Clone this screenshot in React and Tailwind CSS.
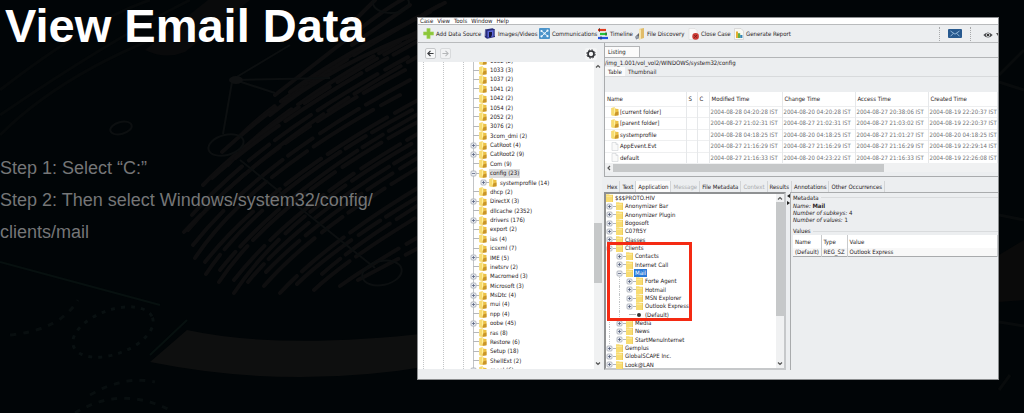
import React from "react";

const dirs = [
  ["1032 (2)", ""], ["1033 (3)", ""], ["1037 (2)", ""], ["1041 (2)", ""], ["1042 (2)", ""], ["1054 (2)", ""],
  ["2052 (2)", ""], ["3076 (2)", ""], ["3com_dmi (2)", ""], ["CatRoot (4)", "+"], ["CatRoot2 (9)", "+"],
  ["Com (9)", ""], ["config (23)", "-"], ["systemprofile (14)", "+", true], ["dhcp (2)", ""], ["DirectX (3)", "+"],
  ["dllcache (2352)", ""], ["drivers (176)", "+"], ["export (2)", ""], ["ias (4)", ""], ["icsxml (7)", ""],
  ["IME (5)", "+"], ["inetsrv (2)", ""], ["Macromed (3)", "+"], ["Microsoft (3)", "+"], ["MsDtc (4)", "+"],
  ["mui (4)", "+"], ["npp (4)", ""], ["oobe (45)", "+"], ["ras (8)", ""], ["Restore (6)", ""],
  ["Setup (18)", ""], ["ShellExt (2)", ""], ["spool (6)", "+"],
];

const files = [
  ["[current folder]", true, "2004-08-28 04:20:28 IST", "2004-08-20 04:20:28 IST", "2004-08-27 20:38:06 IST", "2004-08-19 22:20:37 IST"],
  ["[parent folder]", true, "2004-08-27 21:02:31 IST", "2004-08-27 21:02:31 IST", "2004-08-27 21:03:02 IST", "2004-08-19 22:20:37 IST"],
  ["systemprofile", true, "2004-08-28 04:18:25 IST", "2004-08-20 04:18:25 IST", "2004-08-27 21:01:27 IST", "2004-08-20 04:18:25 IST"],
  ["AppEvent.Evt", false, "2004-08-27 21:16:29 IST", "2004-08-27 21:16:29 IST", "2004-08-27 21:16:29 IST", "2004-08-19 22:29:14 IST"],
  ["default", false, "2004-08-27 21:16:33 IST", "2004-08-20 04:23:22 IST", "2004-08-27 21:16:33 IST", "2004-08-19 22:26:08 IST"],
];

const keys = [
  ["$$$PROTO.HIV", 0], ["Anonymizer Bar", 1], ["Anonymizer Plugin", 1], ["Bogosoft", 1], ["C07ft5Y", 1],
  ["Classes", 1], ["Clients", 1, "-"], ["Contacts", 2], ["Internet Call", 2], ["Mail", 2, "-"],
  ["Forte Agent", 3], ["Hotmail", 3], ["MSN Explorer", 3], ["Outlook Express", 3], ["(Default)", 3, "dot"],
  ["Media", 2], ["News", 2], ["StartMenuInternet", 2], ["Gemplus", 1], ["GlobalSCAPE Inc.", 1], ["Look@LAN", 1],
];

const tabs = ["Hex", "Text", "Application", "Message", "File Metadata", "Context", "Results", "Annotations", "Other Occurrences"];

function Folder() {
  return (
    <svg viewBox="0 0 8 9" className="h-[9px] w-[8px] shrink-0" aria-hidden="true">
      <path d="M.5 1 3.6.4l1 1.3 2.9.2v6.3l-3.6.5L.5 8.2Z" fill="#ecc146" />
      <path d="M.5 1 3.6.4V8.6L.5 8.2Z" fill="#f7dc70" />
      <path d="M3 .8 4.2 1.6V6L3 7Z" fill="#fdeea0" />
      <path d="M4.2 5.5 7.5 4.5V8.2L3.9 8.7Z" fill="#c9952a" />
    </svg>
  );
}

function FlatFolder() {
  return (
    <svg viewBox="0 0 7 8" className="h-[8px] w-[7px] shrink-0" aria-hidden="true">
      <path d="M0 .2h3l.8.6H7V8H0Z" fill="#f8dc72" />
      <path d="M.4 2H6.6V3H.4Z" fill="#fce695" />
      <path d="M6.3 1.1H7V8H6.3Z" fill="#e9c657" />
    </svg>
  );
}

function FileIcon() {
  return (
    <svg viewBox="0 0 7 9" className="h-[9px] w-[8px] shrink-0" aria-hidden="true">
      <path d="M.5.5h4l2 2v6h-6Z" fill="#fafafa" stroke="#cfd2d5" strokeWidth=".6" />
      <path d="M4.5.5v2h2" fill="none" stroke="#cfd2d5" strokeWidth=".6" />
    </svg>
  );
}

function Expander({ kind }) {
  return (
    <svg viewBox="0 0 7 7" className="h-[7px] w-[7px] shrink-0" aria-hidden="true">
      <rect x="1" y="1" width="5" height="5" rx="1" fill="#eceef3" stroke="#a3a8b3" strokeWidth=".8" />
      <path d={kind === "-" ? "M2 3.5h3" : "M2 3.5h3M3.5 2v3"} stroke="#58627f" strokeWidth=".8" />
    </svg>
  );
}

function Chevron({ d, className }) {
  return (
    <svg viewBox="0 0 8 8" className={"h-[8px] w-[8px] shrink-0 " + (className || "")} aria-hidden="true">
      <path d={d} fill="none" stroke="#555" strokeWidth="1.2" />
    </svg>
  );
}

const ridges = [
  [240, 136, 290, 85, 0], [228, 165, 280, 105, 1], [222, 152, 300, 80, 2], [203, 185, 270, 115, 0], [212, 178, 285, 112, 1],
  [192, 215, 262, 135, 2], [188, 230, 255, 150, 0], [184, 232, 280, 130, 1], [195, 258, 250, 175, 2], [193, 245, 260, 160, 0],
  [206, 274, 262, 190, 1], [205, 262, 272, 178, 2], [219, 282, 275, 198, 0], [220, 270, 290, 182, 1], [234, 293, 290, 208, 2],
  [234, 280, 300, 196, 0], [248, 282, 310, 206, 1], [264, 286, 325, 216, 2], [266, 272, 335, 200, 0], [280, 293, 342, 226, 1],
  [297, 284, 355, 228, 2], [314, 290, 368, 240, 0], [322, 274, 380, 222, 1], [340, 286, 390, 250, 2], [358, 280, 400, 258, 0],
];
const dashes = ["46 8 70 7 30 9", "24 7 54 8 90 6", "70 9 26 7 44 8"];

function Backdrop() {
  return (
    <svg viewBox="0 0 1024 413" preserveAspectRatio="none" className="absolute inset-0 h-full w-full" aria-hidden="true">
      <path d="M0 90Q90 20 150 0M0 115Q110 40 190 0M0 135Q75 60 220 15" stroke="#06090a" strokeWidth="3" fill="none" />
      <path d="M145 50 208 0H250L185 52Q165 60 145 50Z" fill="#090a0b" />
      <g fill="none" stroke="#0e0e0f" strokeWidth="4" strokeLinecap="round">
        {ridges.map(([x, y, cx, cy, d]) => (
          <path key={x + "-" + y} strokeDasharray={dashes[d]} d={`M${x} ${y}Q${cx} ${cy} ${cx + 150} ${cy - 80}`} />
        ))}
        <path d="M275 95Q320 60 365 25T430 -10M290 92Q340 55 430 12M270 115Q330 65 430 28M335 40 375 0M352 45 410 5" />
      </g>
      <g fill="none" stroke="#0c0f10" strokeWidth="2">
        <path d="M235 80 330 78M235 80 275 93M232 82 223 134M235 78 290 45M240 160 375 268" />
        <ellipse cx="226" cy="145" rx="18" ry="10" transform="rotate(-15 226 145)" />
        <ellipse cx="121" cy="128" rx="11" ry="6" transform="rotate(-15 121 128)" />
        <ellipse cx="382" cy="273" rx="20" ry="12" transform="rotate(-12 382 273)" />
        <ellipse cx="391" cy="3" rx="18" ry="10" />
      </g>
      <ellipse cx="236" cy="80" rx="7" ry="4" fill="#0f1112" />
      <path d="M0 262 160 305M150 355 187 320" stroke="#07100f" strokeWidth="2" fill="none" />
      <ellipse cx="113" cy="332" rx="42" ry="22" transform="rotate(-20 113 332)" fill="none" stroke="#091011" strokeWidth="3" strokeDasharray="4 6" />
      <path d="M10 335Q60 330 78 300M90 395Q125 375 155 382M75 413Q120 385 170 410" fill="none" stroke="#080e0f" strokeWidth="3" strokeDasharray="6 7" />
      <path d="M187 330Q280 350 430 333V366Q290 390 150 362Z" fill="#0e0f0f" />
      <path d="M999 75 1024 50M999 82 1024 90M999 215 1024 220M999 322 1024 326M999 390 1010 375" stroke="#080b0c" strokeWidth="3" />
      <path d="M999 255 1024 240V300L999 302Z" fill="#0a0a0a" />
    </svg>
  );
}

const btn = "flex shrink-0 items-center gap-[2px] whitespace-nowrap";

function Toolbar() {
  return (
    <div className="flex h-[19px] items-center border-y border-[#b9bbbd] bg-[#eceef0] pl-[5px]" role="toolbar">
      <button className={btn + " w-[61px]"}>
        <svg viewBox="0 0 11 11" className="h-[11px] w-[11px] shrink-0"><path d="M3.9.5h3.2v3.4h3.4v3.2H7.1v3.4H3.9V7.1H.5V3.9h3.4Z" fill="#8cc63a" stroke="#a5d562" strokeWidth=".6" /></svg>
        Add Data Source
      </button>
      <button className={btn + " w-[55px]"}>
        <svg viewBox="0 0 12 11" className="h-[11px] w-[12px] shrink-0">
          <path d="M1 1.5 8.5.3 11 1.5V9L3 10.8.7 9Z" fill="#262c7a" /><path d="M3.5 3 9.5 2V8.6L3.5 9.6Z" fill="#5d68d8" /><path d="M5 4h3v3l-1 2H5Z" fill="#15173b" />
          <path d="M1.4 2.5v6M10.5 2.5v6" stroke="#dde" strokeWidth=".7" strokeDasharray="1 1" />
        </svg>
        Images/Videos
      </button>
      <button className={btn + " w-[58px]"}>
        <svg viewBox="0 0 11 11" className="h-[11px] w-[11px] shrink-0">
          <rect width="11" height="11" rx="1" fill="#4c94ca" /><path d="M2.5 3 5.5 5.5 8.5 2.5M2.5 8.5 5.5 5.5 8.5 8" stroke="#d8ecfa" fill="none" />
          <g fill="#eef7ff"><circle cx="2.5" cy="3" r="1.1" /><circle cx="8.5" cy="2.7" r="1.1" /><circle cx="2.5" cy="8.3" r="1.1" /><circle cx="8.5" cy="8.2" r="1.1" /><circle cx="5.5" cy="5.5" r="1" /></g>
        </svg>
        Communications
      </button>
      <button className={btn + " w-[38px]"}>
        <svg viewBox="0 0 11 12" className="h-[12px] w-[11px] shrink-0">
          <path d="M1 2h8" stroke="#e33a1c" strokeWidth="2.2" /><path d="M3 6h7" stroke="#27c23a" strokeWidth="2.2" /><path d="M1 10h10" stroke="#2254dd" strokeWidth="2.2" />
          <path d="M2.5 0v4M9 4v4M4 8v4" stroke="#222" strokeWidth=".6" />
        </svg>
        Timeline
      </button>
      <button className={btn + " w-[53px]"}>
        <svg viewBox="0 0 10 12" className="h-[12px] w-[10px] shrink-0">
          <path d="M4 1 9 0V10L4 11.5Z" fill="#e0bc6a" /><path d="M4 1 6 1.6V11L4 11.5Z" fill="#f6e4ae" /><path d="M.5 8.5 4 5V10L1 11.5Z" fill="#5f6068" />
          <circle cx="2.2" cy="9.3" r="1.7" fill="#929aa5" />
        </svg>
        File Discovery
      </button>
      <button className={btn + " w-[46px]"}>
        <svg viewBox="0 0 11 12" className="h-[12px] w-[11px] shrink-0">
          <path d="M1 .5h6l2 2v9H1Z" fill="#f9f9f9" stroke="#d5d5d5" strokeWidth=".5" /><circle cx="7.6" cy="8.4" r="3.3" fill="#cb3a34" /><path d="m6.3 7.1 2.6 2.6m0-2.6L6.3 9.7" stroke="#7b1a18" />
        </svg>
        Close Case
      </button>
      <button className={btn}>
        <svg viewBox="0 0 10 12" className="h-[12px] w-[10px] shrink-0">
          <path d="M.5.5h6.5l2.5 2.5v8.5h-9Z" fill="#f8f8f4" stroke="#c9c9c9" strokeWidth=".6" /><path d="M2 3.5h2V10H2Z" fill="#e3ae30" /><path d="M4 5.2h2.2V10H4Z" fill="#5fae49" /><path d="M6.2 7H8.4v3H6.2Z" fill="#3686b8" />
        </svg>
        Generate Report
      </button>
      <div className="ml-auto flex h-full items-center">
        <span className="h-[14px] border-l border-dotted border-[#a8aaac]" />
        <button aria-label="Messages" className="mx-[8px]">
          <svg viewBox="0 0 14 9" className="h-[9px] w-[14px]"><rect width="14" height="9" rx="1" fill="#27598f" /><path d="m2.5 2 4.5 3.2L11.5 2M2.5 7.3 5.5 4.2M11.5 7.3 8.5 4.2" fill="none" stroke="#a9cbea" strokeWidth=".8" /></svg>
        </button>
        <span className="h-[14px] border-l border-dotted border-[#a8aaac]" />
        <button aria-label="View options" className="ml-[12px] flex items-center gap-[3px] pt-[2px]">
          <svg viewBox="0 0 10 6" className="h-[6px] w-[10px]"><path d="M.3 3Q5-2.2 9.7 3 5 8.2.3 3Z" fill="#4b4d50" /><circle cx="5" cy="3" r="2" fill="#e6e8ea" /><circle cx="5" cy="3" r="1.2" fill="#333" /></svg>
          <svg viewBox="0 0 2 3" className="h-[3px] w-[2px]"><path d="M0 0h2v3Z" fill="#555" /></svg>
        </button>
      </div>
    </div>
  );
}

function DirectoryPane() {
  return (
    <section className="flex w-[184px] shrink-0 flex-col">
      <div className="flex h-[19px] items-center gap-[4px] pl-[7px] pr-[5px] pt-[2px]">
        <button aria-label="Back" className="flex h-[11px] w-[11px] items-center justify-center rounded-[2px] border border-[#c6c8ca] bg-[#f6f7f8]">
          <svg viewBox="0 0 8 8" className="h-[7px] w-[7px]"><path d="M7.5 4H1M4 1 1 4l3 3" fill="none" stroke="#3b3d40" strokeWidth="1.4" /></svg>
        </button>
        <button aria-label="Forward" className="flex h-[11px] w-[11px] items-center justify-center rounded-[2px] border border-[#d8dadc] bg-[#f1f2f3]">
          <svg viewBox="0 0 8 8" className="h-[7px] w-[7px]"><path d="M.5 4H7M4 1l3 3-3 3" fill="none" stroke="#b4b6b8" strokeWidth="1.2" /></svg>
        </button>
        <button aria-label="Settings" className="ml-auto flex h-[12px] w-[12px] items-center justify-center rounded-[2px] bg-[#f4f5f6]">
          <svg viewBox="0 0 12 12" className="h-[10px] w-[10px]"><circle cx="6" cy="6" r="3.6" fill="none" stroke="#303236" strokeWidth="2" /><circle cx="6" cy="6" r="5" fill="none" stroke="#303236" strokeWidth="1.2" strokeDasharray="2 1.93" /></svg>
        </button>
      </div>
      <div className="flex h-[307px] overflow-hidden bg-white">
        <div className="ml-[5px] w-[20px] border-l border-dotted border-[#c3c5c7]" />
        <div className="w-[20px] border-l border-dotted border-[#c3c5c7]" />
        <div className="w-[7px] border-l border-dotted border-[#c3c5c7]" />
        <ul className="-mt-[6px] flex h-[319px] min-w-0 flex-1 flex-col">
          {dirs.map(([name, ex, nested]) => (
            <li key={name} className={"relative flex min-h-0 flex-1 items-center whitespace-nowrap " + (nested ? "pl-[10px]" : "")}>
              <span className="absolute inset-y-0 left-[3px] border-l border-[#c3c5c7]" />
              <span className="relative flex w-[9px] shrink-0 items-center">
                <span className={"absolute right-0 border-t border-[#b5b7ba] " + (ex ? "w-[3px]" : "w-[6px]")} />
                {ex && <Expander kind={ex} />}
              </span>
              <Folder />
              <span className={"ml-[2px] flex h-[9px] items-center px-[1px] " + (ex === "-" ? "bg-[#dcddde]" : "")}>{name}</span>
            </li>
          ))}
        </ul>
        <div className="flex w-[8px] flex-col items-center bg-[#f0f1f2]">
          <Chevron d="M2 5.5 4 3.5l2 2" />
          <div className="mt-[153px] h-[60px] w-full bg-[#c6c8c9]" />
          <Chevron d="m2 2.5 2 2 2-2" className="mb-[1px] mt-auto" />
        </div>
      </div>
    </section>
  );
}

function Listing() {
  const cell = "border-r border-[#e6e8ea] pl-[1px] font-normal";
  return (
    <section className="border-b border-l border-[#a9abad] bg-[#eceef0] pt-[4px]">
      <div className="flex h-[11px] items-end border-b border-[#b3b5b7]">
        <button className="flex h-[11px] w-[35px] items-center border-r border-t border-[#b3b5b7] bg-[#fbfbfb] pl-[3px]">Listing</button>
      </div>
      <div className="flex h-[9px] items-center">/img_1.001/vol_vol2/WINDOWS/system32/config</div>
      <div className="flex h-[10px] border-b border-[#d8dadc]">
        <button className="bg-[#fbfbfb] px-[3px]">Table</button>
        <button className="px-[3px] pt-[1px]">Thumbnail</button>
      </div>
      <div className="h-[15px]" />
      <div className="overflow-hidden bg-white">
        <table className="w-full table-fixed border-collapse whitespace-nowrap text-left">
          <colgroup>
            <col className="w-[81px]" /><col className="w-[11px]" /><col className="w-[12px]" /><col className="w-[73px]" /><col className="w-[73px]" /><col className="w-[73px]" /><col />
          </colgroup>
          <thead>
            <tr className="h-[14px]">
              {["Name", "S", "C", "Modified Time", "Change Time", "Access Time", "Created Time"].map((h) => (
                <th key={h} className={cell + " py-0 pl-[2px]"}>{h}</th>
              ))}
            </tr>
          </thead>
          <tbody>
            {files.map(([name, dir, ...times], i) => (
              <tr key={name} className={"border-t border-[#eeeff0] " + (i % 2 ? "h-[12px]" : "h-[11px]")}>
                <td className={cell}><span className="flex items-center gap-[1px] pl-[5px]">{dir ? <Folder /> : <FileIcon />}{name}</span></td>
                <td className={cell} /><td className={cell} />
                {times.map((t, k) => <td key={k} className={cell + " text-[#6f7173]"}>{t}</td>)}
              </tr>
            ))}
          </tbody>
        </table>
      </div>
      <div className="mb-[4px] flex h-[9px] items-center bg-[#f0f1f2]">
        <Chevron d="M5 2 3 4l2 2" />
        <div className="h-[8px] w-[69%] bg-[#c6c8c9]" />
      </div>
    </section>
  );
}

function RegistryTree() {
  return (
    <div className="relative flex h-[178px] w-[182px] shrink-0 border-2 border-[#8f9193] border-r-[#c6c8ca] border-b-[#c6c8ca] bg-white">
      <ul className="flex h-[175px] min-w-0 flex-1 flex-col">
        {keys.map(([name, depth, kind]) => (
          <li key={name} className="flex min-h-0 flex-1 items-center whitespace-nowrap">
            {depth > 1 && <span className="ml-[3px] w-[7px] self-stretch border-l border-dotted border-[#c3c5c7]" />}
            {depth > 2 && <span className="ml-[3px] w-[7px] self-stretch border-l border-dotted border-[#c3c5c7]" />}
            {depth > 0 && (
              <span className="flex w-[10px] shrink-0 items-center">
                {kind !== "dot" && <Expander kind={kind || "+"} />}
                <span className={"ml-auto border-t border-[#b5b7ba] " + (kind === "dot" ? "w-[7px]" : "w-[3px]")} />
              </span>
            )}
            {kind === "dot" ? (
              <span className="ml-[1px] mr-[2px] h-[4px] w-[4px] rounded-full bg-[#333]" />
            ) : (
              <FlatFolder />
            )}
            <span className={"ml-[1px] flex h-[8px] items-center px-[1px] " + (name === "Mail" ? "bg-[#2a7ad8] text-white" : "")}>{name}</span>
          </li>
        ))}
      </ul>
      <div className="flex w-[8px] flex-col items-center bg-[#f0f1f2]">
        <Chevron d="M2 5.5 4 3.5l2 2" />
        <div className="h-[114px] w-full bg-[#c6c8c9]" />
        <Chevron d="m2 2.5 2 2 2-2" className="mt-auto" />
      </div>
      <div className="absolute left-[1px] top-[48px] h-[79px] w-[85px] border-[3px] border-[#f42a13]" />
    </div>
  );
}

function Metadata() {
  const cell = "border-r border-[#c9cbcd] pl-[2px] font-normal";
  return (
    <div className="flex min-w-0 flex-1 flex-col border-l border-t border-[#a9abad] pl-[2px]">
      <div className="flex h-[9px] items-center gap-[2px]">Metadata<span className="flex-1 border-t border-[#d9dbdd]" /></div>
      <div className="h-[25px] leading-[7px]">
        <p><i>Name:</i> <b>Mail</b></p>
        <p><i>Number of subkeys:</i> 4</p>
        <p><i>Number of values:</i> 1</p>
      </div>
      <div className="flex h-[8px] items-center gap-[2px]">Values<span className="flex-1 border-t border-[#d9dbdd]" /></div>
      <table className="w-full table-fixed border-collapse whitespace-nowrap border-b border-[#a9abad] text-left">
        <colgroup><col className="w-[28px]" /><col className="w-[26px]" /><col /></colgroup>
        <thead><tr className="h-[13px] bg-white"><th className={cell}>Name</th><th className={cell}>Type</th><th className={cell}>Value</th></tr></thead>
        <tbody><tr className="h-[8px] bg-[#f8f8f8]"><td className={cell}>(Default)</td><td className={cell}>REG_SZ</td><td className={cell}>Outlook Express</td></tr></tbody>
      </table>
    </div>
  );
}

export default function App() {
  return (
    <main className="relative min-h-screen overflow-hidden bg-[#010507] font-['Liberation_Sans',Arial,sans-serif]">
      <Backdrop />
      <div className="relative grid grid-cols-[417fr_582fr_25fr]">
        <div>
          <h1 className="whitespace-nowrap pl-[5px] text-[47px] font-bold leading-[52px] text-white">View Email Data</h1>
          <div className="mt-[100px] text-[18px] leading-[32px] text-[#757677]">
            <p>Step 1: Select “C:”</p>
            <p>Step 2: Then select Windows/system32/config/<br />clients/mail</p>
          </div>
        </div>
        <div className="mt-[17px] min-w-0 overflow-hidden border border-[#8c8e90] bg-[#eceef0] font-['DejaVu_Sans_Condensed','DejaVu_Sans',sans-serif] text-[6px] leading-[8px] text-[#1f2022]">
          <nav className="flex items-center gap-[4px] bg-white pl-[2px] leading-[6px]">
            {["Case", "View", "Tools", "Window", "Help"].map((m) => <button key={m}>{m}</button>)}
          </nav>
          <Toolbar />
          <div className="flex">
            <DirectoryPane />
            <div className="ml-[2px] min-w-0 flex-1">
              <Listing />
              <div className="mt-[4px] flex h-[11px] items-end whitespace-nowrap pl-[1px]">
                {tabs.map((t) => (
                  <button key={t} className={"h-full border-r border-[#d3d5d7] px-[2px] " + (t === "Application" ? "bg-[#fbfbfb]" : t === "Message" || t === "Context" ? "pt-[1px] text-[#a9abad]" : "pt-[1px]")}>{t}</button>
                ))}
              </div>
              <div className="flex">
                <RegistryTree />
                <div className="flex w-[4px] flex-col items-center gap-[3px] pt-[2px]">
                  <svg viewBox="0 0 3 4" className="h-[4px] w-[3px]"><path d="M3 0v4L0 2Z" fill="#222" /></svg>
                  <svg viewBox="0 0 3 4" className="h-[4px] w-[3px]"><path d="M0 0v4l3-2Z" fill="#222" /></svg>
                </div>
                <Metadata />
              </div>
            </div>
          </div>
          <div className="h-[9px]" />
        </div>
      </div>
    </main>
  );
}
